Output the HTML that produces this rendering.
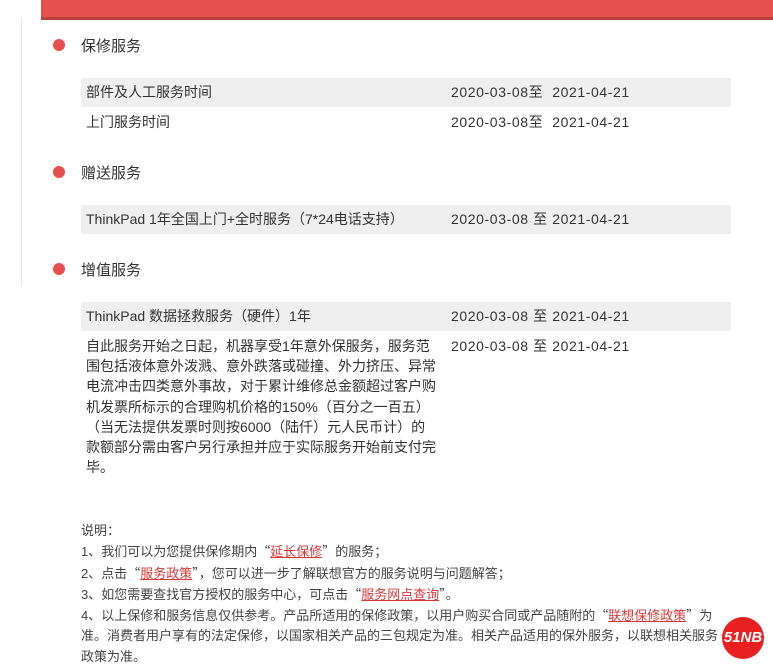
<!DOCTYPE html>
<html><head><meta charset="utf-8"><style>
*{margin:0;padding:0;box-sizing:border-box}
body{width:773px;height:669px;background:#fff;position:relative;overflow:hidden;font-family:"Liberation Sans","Noto Sans CJK SC",sans-serif;color:#333}
.a{position:absolute;white-space:nowrap}
.bar{position:absolute;left:41px;top:0;width:732px;height:20px;background:#e8504d;border-bottom:3px solid #b7413e}
.vl{position:absolute;left:21px;top:18px;width:1px;height:268px;background:#e4e4e4}
.dot{position:absolute;left:53px;width:12px;height:12px;border-radius:50%;background:#e8504d}
.h{position:absolute;left:81px;font-size:15px;color:#333}
.row{position:absolute;left:81px;width:650px;height:29px;font-size:14px;line-height:29px}
.row.g{background:#efefef}
.row .l{position:absolute;left:5px}
.row .r{position:absolute;left:370px;letter-spacing:0.6px}
.p{position:absolute;left:86px;top:336px;font-size:14px;line-height:20.2px;white-space:nowrap}
.n{position:absolute;left:81px;top:521px;font-size:13px;line-height:20.3px;color:#444;white-space:nowrap}
.n a{color:#d6393a;text-decoration:underline}
.q{font-family:"Noto Sans CJK SC",sans-serif}
.logo{position:absolute;left:722px;top:617px;width:42px;height:42px;border-radius:50%;background:#e8201f;color:#fff;font-weight:bold;font-style:italic;font-size:15px;line-height:42px;text-align:center}
</style></head><body>
<div class="bar"></div>
<div class="vl"></div>

<div class="dot" style="top:39px"></div><div class="h" style="top:35px">保修服务</div>
<div class="row g" style="top:78px"><span class="l">部件及人工服务时间</span><span class="r">2020-03-08至&nbsp; 2021-04-21</span></div>
<div class="row" style="top:108px"><span class="l">上门服务时间</span><span class="r">2020-03-08至&nbsp; 2021-04-21</span></div>

<div class="dot" style="top:166px"></div><div class="h" style="top:162px">赠送服务</div>
<div class="row g" style="top:205px"><span class="l">ThinkPad 1年全国上门+全时服务（7*24电话支持）</span><span class="r">2020-03-08 至 2021-04-21</span></div>

<div class="dot" style="top:263px"></div><div class="h" style="top:259px">增值服务</div>
<div class="row g" style="top:302px"><span class="l">ThinkPad 数据拯救服务（硬件）1年</span><span class="r">2020-03-08 至 2021-04-21</span></div>
<div class="p">自此服务开始之日起，机器享受1年意外保服务，服务范<br>围包括液体意外泼溅、意外跌落或碰撞、外力挤压、异常<br>电流冲击四类意外事故，对于累计维修总金额超过客户购<br>机发票所标示的合理购机价格的150%（百分之一百五）<br>（当无法提供发票时则按6000（陆仟）元人民币计）的<br>款额部分需由客户另行承担并应于实际服务开始前支付完<br>毕。</div>
<div class="a" style="left:451px;top:336px;font-size:14px;line-height:20px;letter-spacing:0.6px">2020-03-08 至 2021-04-21</div>

<div class="n">说明：<br>1、我们可以为您提供保修期内<span class="q">“</span><a>延长保修</a><span class="q">”</span>的服务；<br>2、点击<span class="q">“</span><a>服务政策</a><span class="q">”</span>，您可以进一步了解联想官方的服务说明与问题解答；<br>3、如您需要查找官方授权的服务中心，可点击<span class="q">“</span><a>服务网点查询</a><span class="q">”</span>。<br>4、以上保修和服务信息仅供参考。产品所适用的保修政策，以用户购买合同或产品随附的<span class="q">“</span><a>联想保修政策</a><span class="q">”</span>为<br>准。消费者用户享有的法定保修，以国家相关产品的三包规定为准。相关产品适用的保外服务，以联想相关服务<br>政策为准。</div>
<div class="logo">51NB</div>
</body></html>
